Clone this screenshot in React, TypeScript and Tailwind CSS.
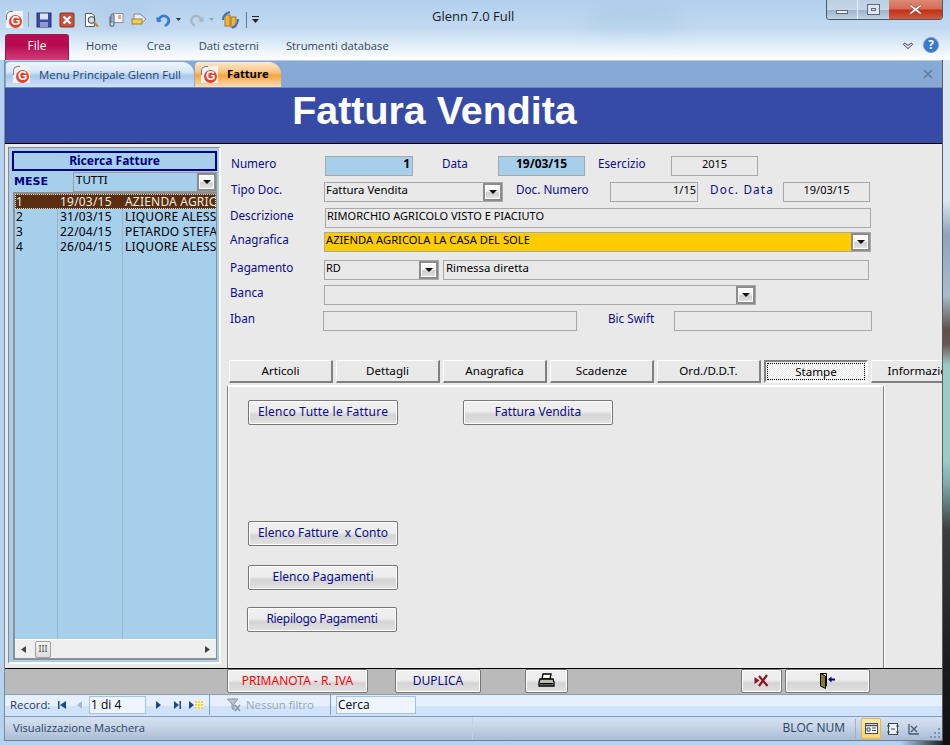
import type { ReactNode } from "react";

function Logo() {
  return (
    <div className="relative w-[17px] h-[17px] bg-[#f2f2f2] overflow-hidden shrink-0">
      <div className="absolute left-[3px] top-[4px] w-[13px] h-[13px] rounded-full bg-[#e2412a]" />
      <span className="absolute left-[5px] top-[3px] text-[12px] leading-[14px] font-bold text-white font-['Liberation_Sans',sans-serif]">G</span>
      <div className="absolute left-0 top-0 w-[7px] h-[9px] border-l border-t border-[#777] rounded-tl-[5px]" />
    </div>
  );
}

function QuickIcons() {
  return (
    <div className="flex items-center h-[33px] pl-[6px] pt-[6px]">
      <Logo />
      <div className="w-px h-[15px] bg-[#8aa0b8] ml-[5px] mr-[7px]" />
      {/* save */}
      <svg width="16" height="16" viewBox="0 0 16 16" className="mr-[7px]">
        <rect x="1" y="1" width="14" height="14" fill="#3d49a8" stroke="#27306f" />
        <rect x="4" y="1.5" width="8" height="6" fill="#d9e4f5" />
        <rect x="4" y="10" width="8" height="5" fill="#8f98cf" />
      </svg>
      {/* close */}
      <svg width="16" height="16" viewBox="0 0 16 16" className="mr-[8px]">
        <rect x="1" y="1" width="14" height="14" rx="1" fill="#c8503b" stroke="#90351f" />
        <path d="M4.5 4.5 11.5 11.5M11.5 4.5 4.5 11.5" stroke="#fff" strokeWidth="2.4" />
      </svg>
      {/* preview */}
      <svg width="17" height="16" viewBox="0 0 17 16" className="mr-[6px]">
        <path d="M2.5 14.5V1.5H9L11.5 4V14.5Z" fill="#fff" stroke="#5d5d5d" />
        <circle cx="8.5" cy="8" r="3.4" fill="#c9dff0" stroke="#3b3b3b" />
        <path d="M11 10.5 15 14.5" stroke="#c08a2c" strokeWidth="2.2" />
      </svg>
      {/* attach */}
      <svg width="18" height="16" viewBox="0 0 18 16" className="mr-[7px]">
        <rect x="7" y="1.5" width="10" height="9" fill="#f4f6fa" stroke="#8a93a6" />
        <path d="M12 4h3M12 6h3" stroke="#c65a46" />
        <path d="M4 4.5V12c0 3 4 3 4 0V3.5c0-2-3-2-3 0V11" fill="none" stroke="#68758a" strokeWidth="1.2" />
      </svg>
      {/* export */}
      <svg width="17" height="16" viewBox="0 0 17 16" className="mr-[8px]">
        <path d="M3 2h6l6 5-6 5v-3H3Z" fill="#e7eef7" stroke="#7c8ba3" />
        <rect x="1" y="7" width="10" height="5" fill="#f1ce53" stroke="#a5822a" />
      </svg>
      {/* undo */}
      <svg width="15" height="16" viewBox="0 0 15 16">
        <path d="M3 10C2 4 9 2 12 6c2 3 0 6-3 8" fill="none" stroke="#3f78cf" strokeWidth="2.6" />
        <path d="M0.5 4.5 6 9.5H0.5Z" fill="#3f78cf" />
      </svg>
      <svg width="5" height="3" viewBox="0 0 5 3" className="ml-[5px] mr-[8px]"><path d="M0 0h5L2.5 3Z" fill="#333" /></svg>
      {/* redo */}
      <svg width="15" height="16" viewBox="0 0 15 16">
        <path d="M12 10C13 4 6 2 3 6c-2 3 0 6 3 8" fill="none" stroke="#a9b6c4" strokeWidth="2.4" />
        <path d="M14.5 4.5 9 9.5H14.5Z" fill="#a9b6c4" />
      </svg>
      <svg width="5" height="3" viewBox="0 0 5 3" className="ml-[5px] mr-[8px]"><path d="M0 0h5L2.5 3Z" fill="#97a3b0" /></svg>
      {/* reports */}
      <svg width="17" height="18" viewBox="0 0 17 18" className="mr-[7px]">
        <rect x="3" y="4" width="5" height="11" fill="#f0b43c" stroke="#a8741c" />
        <rect x="9" y="6" width="5" height="10" fill="#f0b43c" stroke="#a8741c" />
        <path d="M1 9C1 5 4 2 8 1M16 8c0 4-2 7-6 9" fill="none" stroke="#3a72c4" strokeWidth="2" />
      </svg>
      <div className="w-px h-[16px] bg-[#66798f] mr-[5px]" />
      <svg width="7" height="7" viewBox="0 0 7 7"><path d="M0 0h7v1H0ZM0 3h7L3.500 7Z" fill="#222" /></svg>
    </div>
  );
}

function WindowButtons() {
  return (
    <div className="absolute right-[7px] top-0 flex h-[20px] border border-t-0 border-[#4c5a6c] rounded-b-[4px] overflow-hidden">
      <div className="w-[31px] border-r border-[#e8eef5] flex items-center justify-center bg-[linear-gradient(#bcd0e4_0%,#c5d6e8_50%,#9eb4cb_55%,#c2d3e3_100%)]">
        <div className="w-[12px] h-[4px] mt-[5px] bg-[#eaf0f6] border border-[#5a6a7c]" />
      </div>
      <div className="w-[31px] flex items-center justify-center bg-[linear-gradient(#bcd0e4_0%,#c5d6e8_50%,#9eb4cb_55%,#c2d3e3_100%)]">
        <div className="w-[13px] h-[11px] border border-[#5a6a7c] bg-[#dfe8f1] flex items-center justify-center">
          <div className="w-[5px] h-[3px] border border-[#5a6a7c]" />
        </div>
      </div>
      <div className="w-[53px] flex items-center justify-center bg-[linear-gradient(#dc8a78_0%,#d76a55_48%,#bf2f18_52%,#d45a3c_100%)]">
        <svg width="13" height="11" viewBox="0 0 13 11">
          <path d="M1.500 0.500 6.500 4 11.500 0.500 12.500 2 8.500 5.500 12.500 9 11.500 10.500 6.500 7 1.500 10.500 0.500 9 4.500 5.500 0.500 2Z" fill="#fff" stroke="#6b4a48" strokeWidth="0.7" />
        </svg>
      </div>
    </div>
  );
}

function RibbonRow() {
  return (
    <div className="flex items-center h-[27px] pl-[5px] pr-[11px] text-[11.2px] text-[#37465c] font-['Open_Sans',sans-serif]">
      <div className="w-[64px] h-[26px] mt-[1px] rounded-t-[3px] border border-b-0 border-[#8b1f4d] bg-[linear-gradient(#bc0c54_0%,#b50a50_40%,#d43c78_100%)] text-white text-[12px] flex items-center justify-center pb-[3px]">
        File
      </div>
      <span className="ml-[17px]">Home</span>
      <span className="ml-[29px]">Crea</span>
      <span className="ml-[28px]">Dati esterni</span>
      <span className="ml-[27px]">Strumenti database</span>
      <svg width="10" height="7" viewBox="0 0 10 7" className="ml-auto mr-[10px] mt-[-2px]">
        <path d="M1.500 1 5 3.500 8.500 1 9.500 2.500 5 6.500 0.500 2.500Z" fill="#fff" stroke="#333" />
      </svg>
      <div className="w-[16px] h-[16px] mt-[-3px] rounded-full bg-[#3a79cc] border border-[#6e9ddb] text-white text-[12px] font-bold leading-none flex items-center justify-center">?</div>
    </div>
  );
}

function DocTabs() {
  return (
    <div className="flex items-end h-[28px] pl-px bg-[#87a9d5] border-t border-[#b8cde6] border-b border-b-[#6c8ab0] text-[11.4px] font-['Open_Sans',sans-serif]">
      <div className="w-[188px] h-[25px] rounded-tl-[4px] rounded-tr-[12px] flex items-center gap-[9px] pl-[7px] text-[#26456f] bg-[linear-gradient(#f0f6fd_0%,#d7e6f8_40%,#a8c8ef_55%,#cfe1f7_100%)]">
        <Logo />
        <span>Menu Principale Glenn Full</span>
      </div>
      <div className="w-[86px] h-[25px] ml-px rounded-tl-[4px] rounded-tr-[12px] flex items-center gap-[9px] pl-[6px] text-[11.2px] font-bold text-black bg-[linear-gradient(#fbe9cf_0%,#f9c57f_40%,#f8a33f_55%,#fbdfb6_100%)]">
        <Logo />
        <span>Fatture</span>
      </div>
      <svg width="10" height="10" viewBox="0 0 10 10" className="ml-auto mr-[9px] mb-[8px]">
        <path d="M1 1 9 9M9 1 1 9" stroke="#5f7896" strokeWidth="1.400" />
      </svg>
    </div>
  );
}

function ArrowBtn({ className }: { className: string }) {
  return (
    <div className={`shrink-0 border-2 border-[#8c8c8c] flex items-center justify-center shadow-[inset_0_0_0_1px_#fff] bg-[linear-gradient(#ffffff_0%,#f4f4f4_45%,#cfcfcf_55%,#e4e4e4_100%)] ${className}`}>
      <svg width="8" height="4" viewBox="0 0 8 4"><path d="M0 0h8L4 4Z" fill="#111" /></svg>
    </div>
  );
}

function Lbl({ className, children }: { className: string; children: ReactNode }) {
  return <div className={`shrink-0 text-[11.7px] leading-[14px] text-[#0b0b8c] ${className}`}>{children}</div>;
}

function Field({ className, children }: { className: string; children?: ReactNode }) {
  return (
    <div className={`shrink-0 h-[20px] border border-[#a8a8a8] text-[11px] leading-[14px] text-black overflow-hidden whitespace-nowrap ${className}`}>
      {children}
    </div>
  );
}

function Combo({ className, value, bg }: { className: string; value?: string; bg: string }) {
  return (
    <div className={`shrink-0 h-[20px] border border-[#a8a8a8] flex leading-[14px] text-black ${bg} ${className}`}>
      <span className="grow pl-[1px] whitespace-nowrap overflow-hidden">{value}</span>
      <ArrowBtn className="w-[19px] h-[18px]" />
    </div>
  );
}

function FormFields() {
  return (
    <div className="pt-[12px] pl-[9px]">
      <div className="flex h-[20px]">
        <Lbl className="w-[95px] pl-px">Numero</Lbl>
        <Field className="w-[88px] bg-[#a6cfec] text-right font-bold pr-[2px] !text-[12px]">1</Field>
        <Lbl className="ml-[29px] w-[56px]">Data</Lbl>
        <Field className="w-[87px] bg-[#a6cfec] text-center font-bold !text-[12px]">19/03/15</Field>
        <Lbl className="ml-[13px] w-[73px]">Esercizio</Lbl>
        <Field className="w-[87px] text-center">2015</Field>
      </div>
      <div className="flex h-[20px] mt-[6px]">
        <Lbl className="w-[94px] pl-px">Tipo Doc.</Lbl>
        <Combo className="w-[179px] text-[11.4px]" value="Fattura Vendita" bg="" />
        <Lbl className="ml-[13px] w-[94px]">Doc. Numero</Lbl>
        <Field className="w-[88px] text-right pr-px">1/15</Field>
        <Lbl className="ml-[12px] w-[73px] tracking-[1.2px]">Doc. Data</Lbl>
        <Field className="w-[87px] text-center">19/03/15</Field>
      </div>
      <div className="flex h-[20px] mt-[6px]">
        <Lbl className="w-[95px]">Descrizione</Lbl>
        <Field className="w-[546px] pl-[1px]">RIMORCHIO AGRICOLO VISTO E PIACIUTO</Field>
      </div>
      <div className="flex h-[20px] mt-[4px]">
        <Lbl className="w-[94px]">Anagrafica</Lbl>
        <Combo className="w-[547px] text-[11.2px]" value="AZIENDA AGRICOLA LA CASA DEL SOLE" bg="bg-[#ffcc00]" />
      </div>
      <div className="flex h-[20px] mt-[8px]">
        <Lbl className="w-[94px]">Pagamento</Lbl>
        <Combo className="w-[115px] text-[11px]" value="RD" bg="" />
        <Field className="ml-[4px] w-[426px] pl-[2px] !text-[11.4px]">Rimessa diretta</Field>
      </div>
      <div className="flex h-[20px] mt-[5px]">
        <Lbl className="w-[94px]">Banca</Lbl>
        <Combo className="w-[432px]" bg="" />
      </div>
      <div className="flex h-[20px] mt-[6px]">
        <Lbl className="w-[93px]">Iban</Lbl>
        <Field className="w-[254px]" />
        <Lbl className="ml-[31px] w-[66px]">Bic Swift</Lbl>
        <Field className="w-[198px]" />
      </div>
    </div>
  );
}

function TabStrip() {
  const tabs = ["Articoli", "Dettagli", "Anagrafica", "Scadenze", "Ord./D.D.T."];
  return (
    <div className="flex gap-[3px] h-[23px] mt-[29px] pl-[8px] text-[11.6px] text-black">
      {tabs.map((t) => (
        <div key={t} className="w-[104px] shrink-0 flex items-center justify-center border border-t-[#fff] border-l-[#fff] border-r-2 border-b-2 border-r-[#808080] border-b-[#808080]">
          {t}
        </div>
      ))}
      <div className="w-[104px] shrink-0 p-px border-2 border-[#808080] border-b-white border-r-white bg-[repeating-conic-gradient(#fff_0%_25%,#e8e8e8_0%_50%)] bg-[length:2px_2px]">
        <div className="h-full border border-dotted border-black flex items-center justify-center pt-px">Stampe</div>
      </div>
      <div className="w-[104px] shrink-0 flex items-center justify-center border border-t-[#fff] border-l-[#fff] border-r-2 border-b-2 border-r-[#808080] border-b-[#808080] whitespace-nowrap">
        Informazioni
      </div>
    </div>
  );
}

function Btn({ children, className }: { children: ReactNode; className: string }) {
  return (
    <div className={`shrink-0 flex items-center justify-center pb-px border border-[#777] rounded-[2px] text-[12px] text-[#0b0b8c] shadow-[inset_0_0_0_1px_#fff] bg-[linear-gradient(#f0f0f0_0%,#ededed_45%,#d4d4d4_60%,#e2e2e2_100%)] ${className}`}>
      {children}
    </div>
  );
}

function StampeBody() {
  return (
    <div className="w-[657px] h-[283px] mt-[2px] ml-[6px] border-l border-l-[#808080] border-t-2 border-t-white border-r border-r-[#808080] shadow-[inset_1px_0_0_#fff,1px_0_0_#fff] pl-[20px] pt-[13px]">
      <div className="flex gap-[65px]">
        <Btn className="w-[150px] h-[25px] tracking-[0.2px]">Elenco Tutte le Fatture</Btn>
        <Btn className="w-[150px] h-[25px]">Fattura Vendita</Btn>
      </div>
      <Btn className="w-[150px] h-[25px] mt-[96px]">Elenco Fatture&nbsp; x Conto</Btn>
      <Btn className="w-[150px] h-[25px] mt-[19px]">Elenco Pagamenti</Btn>
      <Btn className="w-[150px] h-[25px] mt-[17px] -ml-px tracking-[-0.3px]">Riepilogo Pagamenti</Btn>
    </div>
  );
}

function SearchPanel() {
  const rows = [
    ["1", "19/03/15", "AZIENDA AGRICOLA"],
    ["2", "31/03/15", "LIQUORE ALESSANDRO"],
    ["3", "22/04/15", "PETARDO STEFANO"],
    ["4", "26/04/15", "LIQUORE ALESSANDRO"],
  ];
  return (
    <div className="w-[216px] shrink-0 pt-[3px] pl-[3px]">
      <div className="w-[213px] h-[517px] border-t border-l border-[#8a8a8a] border-r-2 border-b-2 border-r-white border-b-white bg-[#a6cfec] pl-[3px] pr-[1px] pt-[3px] flex flex-col">
        <div className="h-[20px] mr-px border-2 border-[#000080] text-[12px] font-bold text-[#000080] text-center leading-[16px]">Ricerca Fatture</div>
        <div className="flex h-[20px] mt-[1px]">
          <div className="w-[61px] text-[11px] font-bold text-[#000080] pl-[2px] font-['DejaVu_Sans',sans-serif] leading-[20px]">MESE</div>
          <div className="grow h-[20px] mr-px border border-[#9a9a9a] flex text-[11.5px] leading-[13px] text-black">
            <span className="grow pl-[2px]">TUTTI</span>
            <ArrowBtn className="w-[19px] h-[18px]" />
          </div>
        </div>
        <div className="relative ml-[1px] mr-px h-[468px] border-2 border-r border-[#8f8f8f] overflow-hidden flex flex-col">
          <div className="grow relative text-[12px] leading-[15px] tracking-[0.2px] text-black">
            <div className="absolute left-[42px] top-0 bottom-0 w-px bg-[#9bb4c8]" />
            <div className="absolute left-[107px] top-0 bottom-0 w-px bg-[#9bb4c8]" />
            {rows.map((r, i) => (
              <div key={r[0]} className={`relative flex h-[15px] whitespace-nowrap overflow-hidden ${i === 0 ? "bg-[#5a2e12] text-[#f4efe0] outline-1 outline-dotted outline-offset-[-1px] outline-[#e8e0c8]" : ""}`}>
                <span className="w-[45px] pl-[1px] shrink-0">{r[0]}</span>
                <span className="w-[65px] shrink-0">{r[1]}</span>
                <span>{r[2]}</span>
              </div>
            ))}
          </div>
          <div className="h-[19px] shrink-0 flex items-center bg-[#efefef] border-t border-[#fff]">
            <svg width="5" height="7" viewBox="0 0 5 7" className="ml-[6px]"><path d="M5 0v7L0 3.500Z" fill="#444" /></svg>
            <div className="ml-[9px] w-[16px] h-[17px] border border-[#a0a0a0] rounded-[2px] bg-[linear-gradient(#f4f4f4,#dcdcdc)] text-[9px] leading-[14px] text-center text-[#555]">III</div>
            <svg width="5" height="7" viewBox="0 0 5 7" className="ml-auto mr-[6px]"><path d="M0 0v7L5 3.500Z" fill="#444" /></svg>
          </div>
        </div>
      </div>
    </div>
  );
}

function FooterBar() {
  return (
    <div className="h-[25px] border-t-0 bg-[#bababa] flex pl-[222px] text-[12px]">
      <Btn className="w-[141px] h-[24px] !text-[#ff0000]">PRIMANOTA - R. IVA</Btn>
      <Btn className="w-[86px] h-[24px] ml-[27px]">DUPLICA</Btn>
      <Btn className="w-[43px] h-[24px] ml-[44px]">
        <svg width="17" height="16" viewBox="0 0 17 16">
          <path d="M5 1h8l-1 5H4Z" fill="#fff" stroke="#000" strokeWidth="1.300" />
          <path d="M2 6h13l1 3v4H1V9Z" fill="#bbb" stroke="#000" strokeWidth="1.300" />
          <rect x="2" y="10" width="13" height="1.500" fill="#000" />
          <rect x="6" y="8" width="3" height="1" fill="#d8c820" />
        </svg>
      </Btn>
      <Btn className="w-[41px] h-[24px] ml-[173px]">
        <svg width="15" height="13" viewBox="0 0 15 13">
          <path d="M0.500 3 5.500 6.500 0.500 10Z" fill="#8c1620" />
          <path d="M5 12 13 1M5 2 13.500 12" stroke="#8c1620" strokeWidth="2.200" />
        </svg>
      </Btn>
      <Btn className="w-[85px] h-[24px] ml-[3px]">
        <svg width="16" height="16" viewBox="0 0 16 16">
          <path d="M0.500 0.500H6.500V13H0.500Z" fill="#fff" stroke="#000" />
          <path d="M0.500 0.500 5.500 3V15.500L0.500 13Z" fill="#86821a" stroke="#000" />
          <path d="M8 6.500 11.500 3.500V5.500H15V7.500H11.500V9.500Z" fill="#000080" />
        </svg>
      </Btn>
    </div>
  );
}

function RecordNav() {
  return (
    <div className="h-[23px] pb-px border-y border-t-[#7ba1d0] border-b-[#7e9dc4] flex text-[11.4px] font-['Open_Sans',sans-serif] bg-[linear-gradient(#e6f0fd_0%,#e6f0fd_50%,#d0e3fb_50%,#d0e3fb_100%)]">
      <div className="w-[205px] flex items-center pl-[5px] border-r border-[#7ba1d0] text-[#1e3a64]">
        <span className="w-[40px]">Record:</span>
        <svg width="8" height="8" viewBox="0 0 8 8" className="ml-[8px]"><path d="M0 0h1.500v8H0ZM8 0v8L2 4Z" fill="#1f4788" /></svg>
        <svg width="5" height="8" viewBox="0 0 5 8" className="ml-[11px]"><path d="M5 0v8L0 4Z" fill="#9fb8d8" /></svg>
        <div className="ml-[7px] w-[57px] h-[18px] border border-[#a9c0dd] bg-[#eef5fe] text-black text-[12px] pl-[1px] leading-[16px]">1 di 4</div>
        <svg width="5" height="8" viewBox="0 0 5 8" className="ml-[10px]"><path d="M0 0v8L5 4Z" fill="#1f4788" /></svg>
        <svg width="7" height="8" viewBox="0 0 7 8" className="ml-[13px]"><path d="M0 0v8L5 4ZM5.500 0H7V8H5.500Z" fill="#1f4788" /></svg>
        <svg width="14" height="8" viewBox="0 0 14 8" className="ml-[8px]">
          <path d="M0 0v8L5 4Z" fill="#1f4788" />
          <rect x="6" y="0" width="8" height="8" fill="#f1cf4f" />
          <path d="M8.500 0v8M11.500 0v8M6 2.500h8M6 5.500h8" stroke="#fdf3c4" />
        </svg>
      </div>
      <div className="w-[121px] flex items-center pl-[17px] border-r border-[#7ba1d0] text-[#98a5b5]">
        <svg width="14" height="14" viewBox="0 0 14 14" className="mr-[5px]">
          <path d="M0.500 1H11L7 6V12L5 10.500V6Z" fill="#b9c3d0" stroke="#8794a6" />
          <path d="M8 7 13 13M13 7 8 13" stroke="#8794a6" strokeWidth="1.500" />
        </svg>
        <span>Nessun filtro</span>
      </div>
      <div className="flex items-center pl-[5px]">
        <div className="w-[80px] h-[18px] border border-[#a9c0dd] bg-[#eef5fe] text-black text-[12px] pl-[1px] leading-[16px]">Cerca</div>
      </div>
    </div>
  );
}

function StatusBar() {
  return (
    <div className="h-[24px] flex items-center pl-[8px] border-b border-[#6e7f95] text-[11.2px] font-['Open_Sans',sans-serif] text-[#2d4263] bg-[linear-gradient(#d6e2f0_0%,#c8d6e8_40%,#a9bcd5_100%)]">
      <span className="w-[460px] h-full border-r border-[#c2d0e2] flex items-center pb-px">Visualizzazione Maschera</span>
      <span className="ml-auto text-[12px] pb-px">BLOC NUM</span>
      <div className="w-px h-[20px] bg-[#9fb1c8] ml-[10px] mr-[5px]" />
      <div className="w-[20px] h-[21px] rounded-[2px] border border-[#e8b64a] bg-[linear-gradient(#fde9a8,#fbd36e)] flex items-center justify-center">
        <svg width="13" height="11" viewBox="0 0 13 11">
          <rect x="0.500" y="0.500" width="12" height="10" fill="#fff" stroke="#3c4a5c" />
          <path d="M0.500 2.500h12" stroke="#3c4a5c" strokeWidth="1.500" />
          <path d="M2 5h3v3H2ZM7 5h4M7 7.500h4" stroke="#3c4a5c" fill="none" />
        </svg>
      </div>
      <svg width="12" height="12" viewBox="0 0 12 12" className="ml-[6px]">
        <rect x="1.500" y="0.500" width="9" height="11" fill="#eef2f7" stroke="#3c4a5c" />
        <path d="M0 3h3M0 9h3M9 3h3M9 9h3M4 6h4" stroke="#3c4a5c" />
      </svg>
      <svg width="12" height="12" viewBox="0 0 12 12" className="ml-[9px]">
        <path d="M1 11H11M1 11V1M3 9 9 3M3 3 9 9" stroke="#4a5a6e" strokeWidth="1.300" fill="none" />
      </svg>
      <svg width="10" height="10" viewBox="0 0 10 10" className="ml-[10px] mr-[2px] mt-[8px]">
        <path d="M8 0h2v2H8ZM4 4h2v2H4ZM8 4h2v2H8ZM0 8h2v2H0ZM4 8h2v2H4ZM8 8h2v2H8Z" fill="#7e93ae" />
      </svg>
    </div>
  );
}

export default function App() {
  return (
    <div className="relative w-[950px] h-[745px] overflow-hidden pr-[7px] pl-[5px] font-['Noto_Sans',sans-serif] bg-[linear-gradient(#b2d1ee_0px,#c0d9f0_28px,#dfecf8_44px,#ffffff_60px,#b5d2ee_60px,#b5d2ee_100%)]">
      <div className="absolute left-[90px] top-[6px] w-[60px] h-[16px] rounded-full bg-[#9db7d2] opacity-40 blur-md" />
      <div className="absolute left-[590px] top-[8px] w-[90px] h-[18px] rounded-full bg-[#9db7d2] opacity-40 blur-md" />
      {/* desktop showing through the glass frame on the right */}
      <div className="absolute left-[943px] top-[60px] w-[7px] h-[685px] bg-[linear-gradient(#dbe7f2_0px,#dbe7f2_140px,#8fa5bb_175px,#aabccd_235px,#5f4f4c_270px,#6a5a55_285px,#9ccbc8_305px,#9ccbc8_400px,#7fa8a8_425px,#3a3d40_470px,#1d1d1f_600px,#101012_685px)]" />
      <div className="absolute left-[900px] top-[741px] w-[43px] h-[4px] bg-[linear-gradient(90deg,#b5d2ee,#1d1d1f)]" />

      <div className="relative h-[60px] -ml-[5px] -mr-[7px]">
        <QuickIcons />
        <RibbonRow />
        <div className="absolute left-[432px] top-[7px] text-[13px] text-[#1c1c1c] font-['Open_Sans',sans-serif]">Glenn 7.0 Full</div>
        <WindowButtons />
      </div>

      <div className="relative w-[938px] h-[681px] border-r border-r-[#5a5a5a] bg-[#e9e9e9] shadow-[-1px_0_0_#7a8a9e]">
        <DocTabs />
        <div className="h-[56px] bg-[#354ba5] border-b border-black flex justify-center items-center pr-[78px] pb-[9px]">
          <h1 className="text-[39.4px] font-bold text-white font-['Liberation_Sans',sans-serif] leading-none">Fattura Vendita</h1>
        </div>
        <div className="h-[525px] flex border-b border-black overflow-hidden">
          <SearchPanel />
          <div className="grow min-w-0 overflow-hidden">
            <FormFields />
            <TabStrip />
            <StampeBody />
          </div>
        </div>
        <FooterBar />
        <RecordNav />
        <StatusBar />
      </div>
    </div>
  );
}
